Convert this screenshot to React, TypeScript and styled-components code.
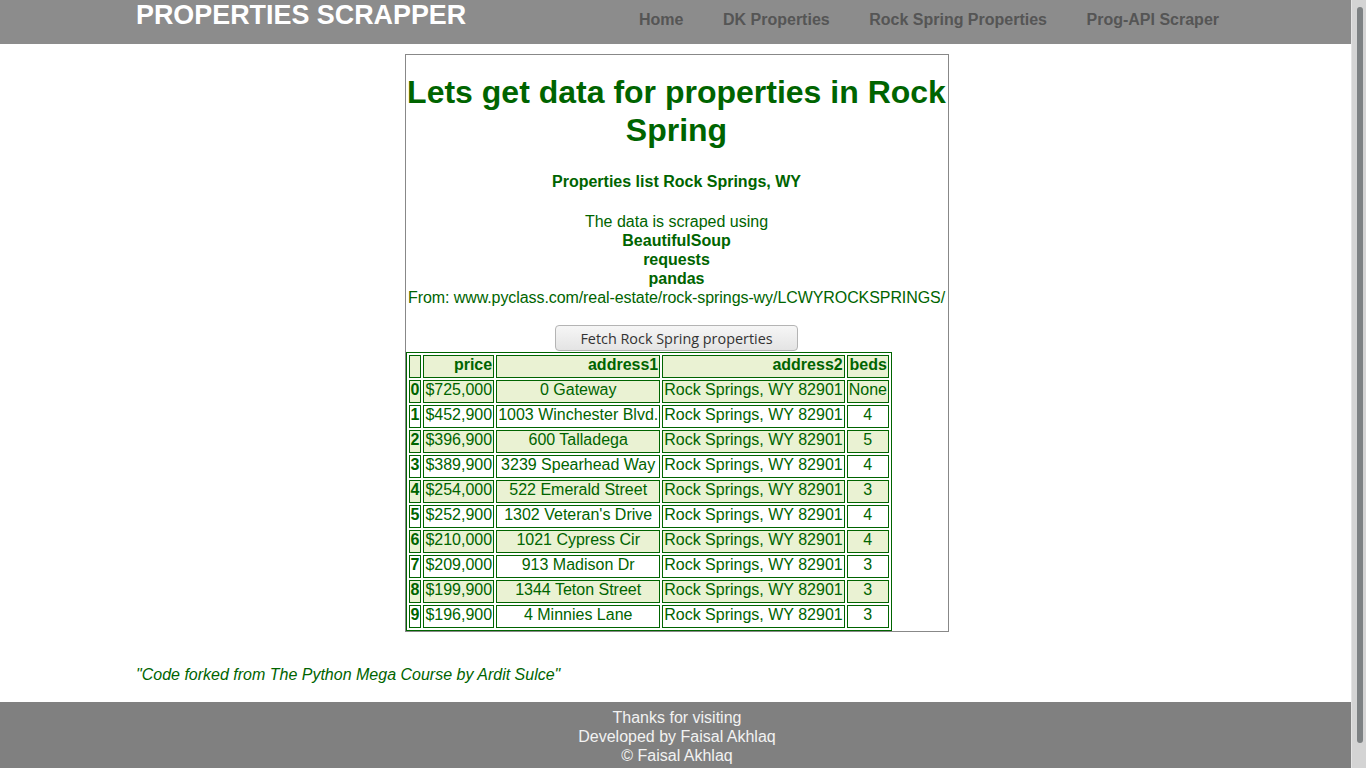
import React from "react";
import styled, { createGlobalStyle } from "styled-components";

const GlobalStyle = createGlobalStyle`
  html, body {
    margin: 0;
    padding: 0;
    background: #ffffff;
    font-family: "Liberation Sans", Arial, sans-serif;
  }
`;

const Page = styled.div`
  margin-right: 15px;
`;

const ScrollTrack = styled.div`
  position: fixed;
  top: 0;
  right: 0;
  width: 14px;
  height: 100vh;
  background: #d4d4d4;
  border-left: 1px solid #e4e4e4;
`;

const ScrollThumb = styled.div`
  position: absolute;
  top: 7px;
  left: 5px;
  width: 6px;
  height: 736px;
  border-radius: 3px;
  background: #7d8183;
`;

const Header = styled.header`
  height: 44px;
  background: #8c8c8c;
  display: flex;
  justify-content: space-between;
  align-items: flex-start;
  padding: 0 132px 0 136px;
`;

const Brand = styled.div`
  color: #ffffff;
  font-weight: bold;
  font-size: 26.9px;
  line-height: 30px;
`;

const Nav = styled.nav`
  display: flex;
  gap: 39.5px;
  padding-top: 10px;
`;

const NavLink = styled.a`
  color: #555555;
  font-weight: bold;
  font-size: 16px;
  line-height: 19px;
  text-decoration: none;
`;

const Main = styled.main`
  display: flex;
  justify-content: center;
  padding: 10px 0 0 2px;
`;

const Box = styled.section`
  width: 542px;
  border: 1px solid #888888;
  color: #006400;
  text-align: center;
`;

const Title = styled.h1`
  margin: 18px 0 0;
  font-size: 32px;
  line-height: 38px;
  font-weight: bold;
`;

const Subtitle = styled.h4`
  margin: 23px 0 0;
  font-size: 16px;
  line-height: 19px;
  font-weight: bold;
`;

const Info = styled.p`
  margin: 21px 0 0;
  font-size: 16px;
  line-height: 19px;
`;

const Lib = styled.b`
  display: block;
`;

const Source = styled.span`
  display: block;
  white-space: nowrap;
  letter-spacing: -0.08px;
`;

const ButtonRow = styled.div`
  display: flex;
  justify-content: center;
  margin: 18px 0 1px;
`;

const FetchButton = styled.button`
  height: 26px;
  padding: 0 24px;
  font-family: "Open Sans", "Noto Sans", sans-serif;
  font-size: 14.4px;
  color: #333333;
  background: linear-gradient(#f6f6f6, #e4e4e4);
  border: 1px solid #b4b4b4;
  border-radius: 4px;
`;

const Table = styled.table`
  border: 1px solid #006400;
  border-spacing: 2px;
  font-size: 16px;
  line-height: 17px;
  color: #006400;
`;

const Row = styled.tr<{ $alt: boolean }>`
  background: ${(p) => (p.$alt ? "#eaf2d3" : "#ffffff")};
`;

const HeadCell = styled.th`
  border: 1px solid #006400;
  padding: 0 1px 4px;
  text-align: right;
  font-weight: bold;
`;

const IndexCell = styled.th`
  border: 1px solid #006400;
  padding: 0 1px 4px;
  text-align: center;
  font-weight: bold;
`;

const Cell = styled.td`
  border: 1px solid #006400;
  padding: 0 1px 4px;
  text-align: center;
  white-space: nowrap;
`;

const Quote = styled.p`
  margin: 33px 0 0;
  padding-left: 136px;
  font-style: italic;
  font-size: 16px;
  line-height: 19px;
  color: #006400;
`;

const Footer = styled.footer`
  margin-top: 18px;
  background: #808080;
  color: #f2f2f2;
  text-align: center;
  font-size: 16px;
  line-height: 19px;
  padding: 6px 0 36px 3px;
`;

const rows = [
  ["$725,000", "0 Gateway", "Rock Springs, WY 82901", "None"],
  ["$452,900", "1003 Winchester Blvd.", "Rock Springs, WY 82901", "4"],
  ["$396,900", "600 Talladega", "Rock Springs, WY 82901", "5"],
  ["$389,900", "3239 Spearhead Way", "Rock Springs, WY 82901", "4"],
  ["$254,000", "522 Emerald Street", "Rock Springs, WY 82901", "3"],
  ["$252,900", "1302 Veteran's Drive", "Rock Springs, WY 82901", "4"],
  ["$210,000", "1021 Cypress Cir", "Rock Springs, WY 82901", "4"],
  ["$209,000", "913 Madison Dr", "Rock Springs, WY 82901", "3"],
  ["$199,900", "1344 Teton Street", "Rock Springs, WY 82901", "3"],
  ["$196,900", "4 Minnies Lane", "Rock Springs, WY 82901", "3"],
];

export default function App() {
  return (
    <>
      <GlobalStyle />
      <Page>
        <Header>
          <Brand>PROPERTIES SCRAPPER</Brand>
          <Nav>
            <NavLink href="#">Home</NavLink>
            <NavLink href="#">DK Properties</NavLink>
            <NavLink href="#">Rock Spring Properties</NavLink>
            <NavLink href="#">Prog-API Scraper</NavLink>
          </Nav>
        </Header>
        <Main>
          <Box>
            <Title>Lets get data for properties in Rock Spring</Title>
            <Subtitle>Properties list Rock Springs, WY</Subtitle>
            <Info>
              The data is scraped using
              <Lib>BeautifulSoup</Lib>
              <Lib>requests</Lib>
              <Lib>pandas</Lib>
              <Source>From: www.pyclass.com/real-estate/rock-springs-wy/LCWYROCKSPRINGS/</Source>
            </Info>
            <ButtonRow>
              <FetchButton>Fetch Rock Spring properties</FetchButton>
            </ButtonRow>
            <Table>
              <thead>
                <Row $alt={true}>
                  <HeadCell></HeadCell>
                  <HeadCell>price</HeadCell>
                  <HeadCell>address1</HeadCell>
                  <HeadCell>address2</HeadCell>
                  <HeadCell>beds</HeadCell>
                </Row>
              </thead>
              <tbody>
                {rows.map((r, i) => (
                  <Row key={i} $alt={i % 2 === 0}>
                    <IndexCell>{i}</IndexCell>
                    {r.map((c, j) => (
                      <Cell key={j}>{c}</Cell>
                    ))}
                  </Row>
                ))}
              </tbody>
            </Table>
          </Box>
        </Main>
        <Quote>"Code forked from The Python Mega Course by Ardit Sulce"</Quote>
        <Footer>
          <div>Thanks for visiting</div>
          <div>Developed by Faisal Akhlaq</div>
          <div>© Faisal Akhlaq</div>
        </Footer>
      </Page>
      <ScrollTrack>
        <ScrollThumb />
      </ScrollTrack>
    </>
  );
}
